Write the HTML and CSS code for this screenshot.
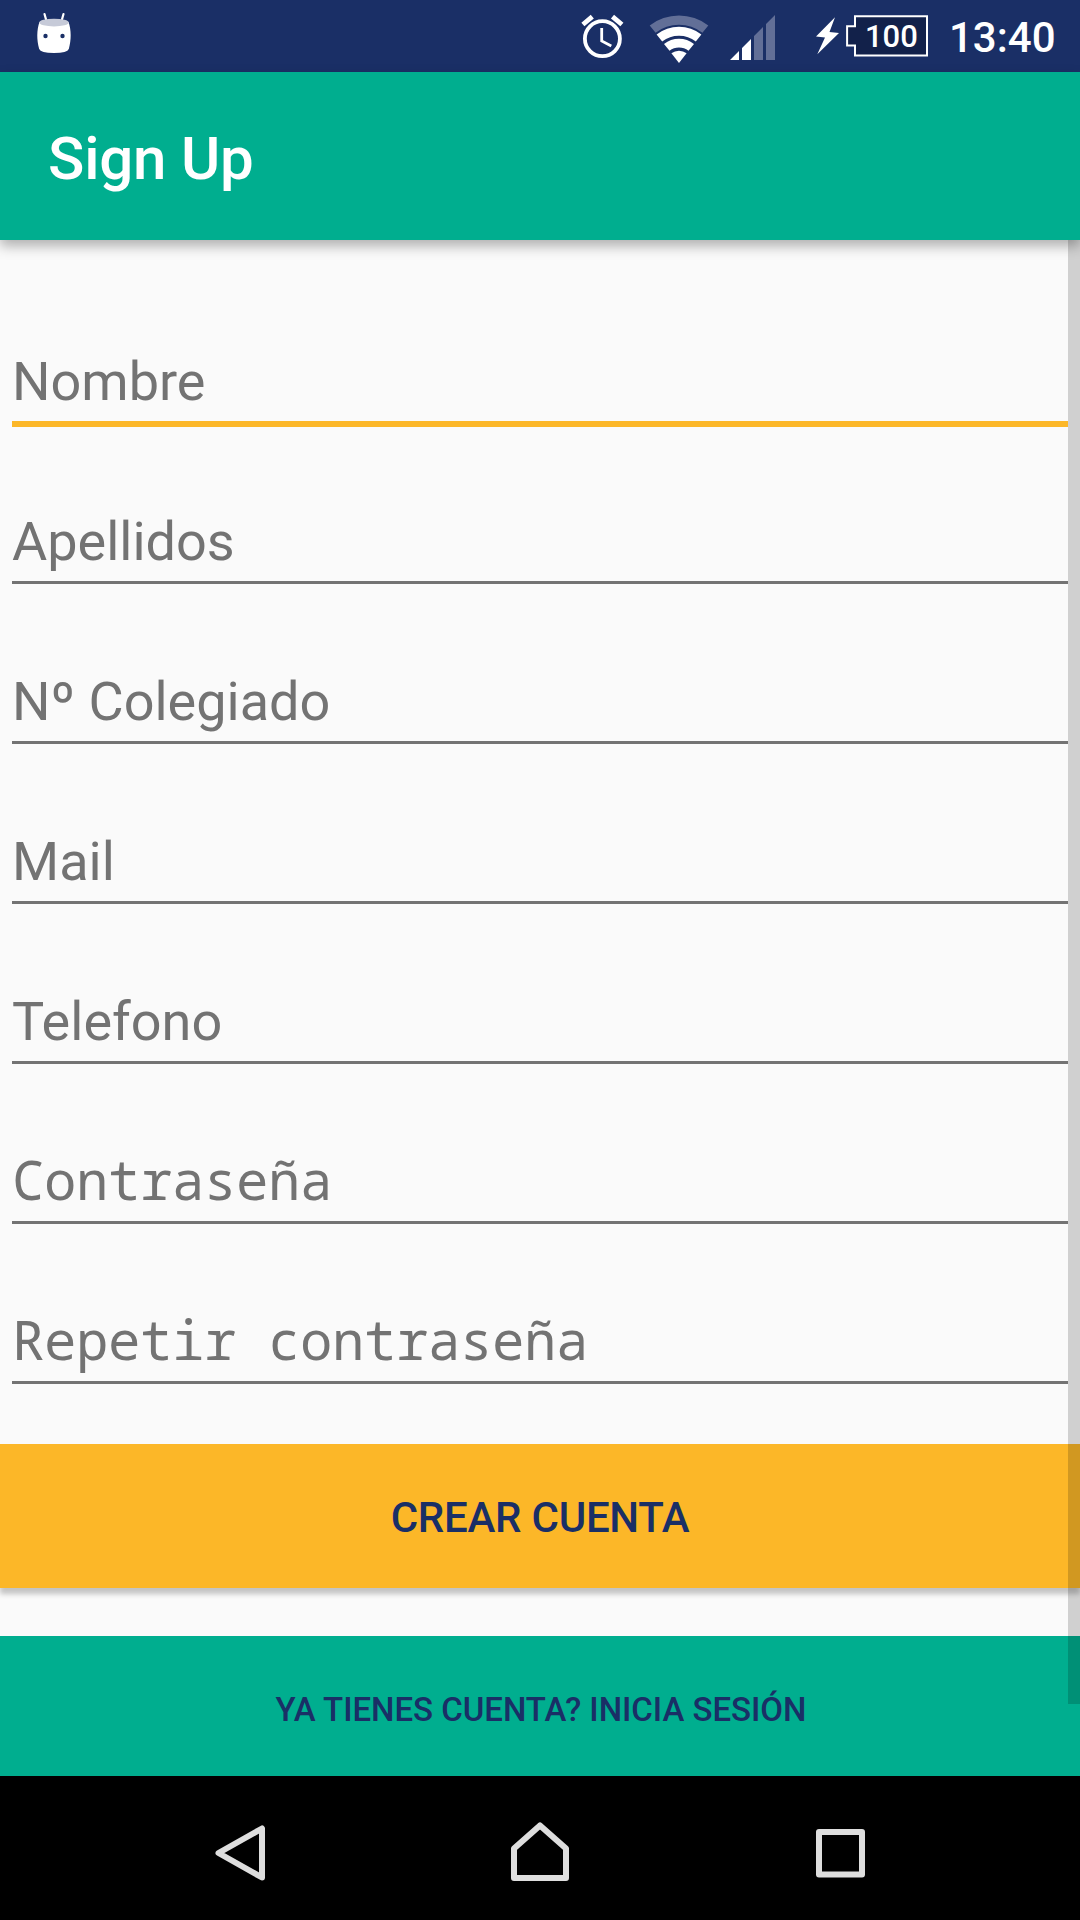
FILE: index.html
```html
<!DOCTYPE html>
<html lang="es">
<head>
<meta charset="utf-8">
<title>Sign Up</title>
<link rel="stylesheet" href="styles.css">
</head>
<body>
<div class="screen">
  <div class="status-bar">
    <svg class="icon-droid" width="36" height="72" viewBox="36 0 36 72">
      <path d="M44.500 14L46.300 20.500M63.500 14L61.700 20.500" stroke="#fff" stroke-width="2.200" stroke-linecap="round"/>
      <path d="M39.500 22C36.600 30 36.600 40 39.200 49Q40.500 53 54 53T68.800 49C71.400 40 71.400 30 68.500 22Q54 29 39.500 22Z" fill="#fff"/>
      <ellipse cx="54" cy="22.600" rx="14.800" ry="3.900" fill="#c6cad8"/>
      <circle cx="45.500" cy="36" r="2.200" fill="#1a2f66"/>
      <circle cx="62.500" cy="36" r="2.200" fill="#1a2f66"/>
    </svg>
    <div class="status-right">
      <svg width="44" height="72" viewBox="580 0 44 72" fill="none" stroke="#fff">
        <circle cx="602.400" cy="38.700" r="17.500" stroke-width="3.800"/>
        <path d="M582.900 24.500L592.300 16.600M621.900 24.500L612.500 16.600" stroke-width="4.800"/>
        <path d="M601.700 28V41L611.300 46" stroke-width="2.800"/>
      </svg>
      <svg class="icon-wifi" width="60" height="72" viewBox="-30 -63 60 72" fill="#fff">
        <path fill="#626f97" d="M-29.300 -37.600A48 48 0 0 1 29.300 -37.600L23.400 -30.200A38 38 0 0 0 -23.400 -30.200Z"/>
        <path d="M-22.400 -28.600A36.300 36.300 0 0 1 22.400 -28.600L16.800 -21.500A27.300 27.300 0 0 0 -16.800 -21.500Z"/>
        <path d="M-15 -19.100A24.300 24.300 0 0 1 15 -19.100L9.500 -12.200A15.500 15.500 0 0 0 -9.500 -12.200Z"/>
        <path d="M-7.600 -9.700A12.300 12.300 0 0 1 7.600 -9.700L0 0Z"/>
      </svg>
      <svg class="icon-signal" width="45" height="72" viewBox="730 0 45 72" fill="#fff">
        <path d="M730 60L739 51V60ZM742 60V48L751 39V60Z"/>
        <path fill="#626f97" d="M754 60V36L763 27V60ZM766 60V24L775 15V60Z"/>
      </svg>
      <svg class="icon-bolt" width="24" height="72" viewBox="816 0 24 72" fill="#fff">
        <path d="M835 17.300L816 36.500L825 37.500L817.300 54.300L839 33L829.500 32Z"/>
      </svg>
      <div class="battery">
        <svg width="82" height="72" viewBox="846 0 82 72">
          <path d="M855 16.200H927V55.500H855V45.500H847.100V26.200H855Z" fill="#12214a" stroke="#fff" stroke-width="2"/>
        </svg>
        <span class="battery-level">100</span>
      </div>
      <span class="clock">13:40</span>
    </div>
  </div>

  <header class="app-bar">Sign Up</header>

  <main class="content">
    <form class="form">
      <div class="field focused">Nombre</div>
      <div class="field">Apellidos</div>
      <div class="field">Nº Colegiado</div>
      <div class="field">Mail</div>
      <div class="field">Telefono</div>
      <div class="field password">Contraseña</div>
      <div class="field password">Repetir contraseña</div>
    </form>
    <button class="create">CREAR CUENTA</button>
    <button class="login">YA TIENES CUENTA? INICIA SESIÓN</button>
    <div class="scrollbar"></div>
  </main>

  <nav class="nav-bar">
    <svg width="60" height="144" viewBox="210 1776 60 144"><path d="M262 1828.500V1877.500L218.500 1853Z"/></svg>
    <svg width="60" height="144" viewBox="510 1776 60 144"><path d="M540 1825.500L566 1848.500V1878H514V1848.500Z"/></svg>
    <svg width="60" height="144" viewBox="810 1776 60 144"><path d="M819 1832H862V1874.500H819Z"/></svg>
  </nav>
</div>
</body>
</html>
```
FILE: styles.css
```css
* { box-sizing: border-box; }

body {
  margin: 0;
  background: #fafafa;
  font-family: Roboto, "Noto Sans", sans-serif;
}

svg { display: block; flex: none; }

.screen {
  width: 1080px;
  height: 1920px;
  display: flex;
  flex-direction: column;
  overflow: hidden;
}

.status-bar {
  height: 72px;
  flex: none;
  display: flex;
  justify-content: space-between;
  padding: 0 25px 0 36px;
  background: #1a2f66;
  color: #fff;
  font-weight: 500;
}

.status-right { display: flex; }
.icon-wifi { margin-left: 25px; }
.icon-signal { margin-left: 21px; }
.icon-bolt { margin-left: 41px; }

.battery {
  display: grid;
  margin-left: 6px;
}
.battery > * { grid-area: 1 / 1; }
.battery-level {
  font-size: 31px;
  line-height: 73px;
  padding-left: 19px;
}

.clock {
  width: 106px;
  margin-left: 21px;
  font-size: 42px;
  line-height: 76px;
}

.app-bar {
  position: relative;
  z-index: 1;
  height: 168px;
  flex: none;
  padding: 5px 48px 0;
  background: #00ae8f;
  box-shadow: 0 6px 12px rgba(0, 0, 0, .3);
  color: #fff;
  font-size: 60px;
  font-weight: 500;
  letter-spacing: -.2px;
  line-height: 163px;
}

.content {
  position: relative;
  height: 1536px;
  flex: none;
  display: flex;
  flex-direction: column;
}

.form { padding: 27px 12px 0; }

.field {
  height: 160px;
  padding-top: 83px;
  background: linear-gradient(#737373, #737373) 0 154px / 100% 3px no-repeat;
  color: #737373;
  font-size: 54px;
  line-height: 63px;
}
.field.focused {
  background: linear-gradient(#fcb728, #fcb728) 0 154px / 100% 6px no-repeat;
}
.field.password {
  padding-top: 81px;
  font-family: "Droid Sans Mono", "Noto Sans Mono", "DejaVu Sans Mono", monospace;
  letter-spacing: -.4px;
}

button {
  border: 0;
  font-family: inherit;
  font-weight: 500;
  color: #1a2f66;
  text-align: center;
}

.create {
  height: 144px;
  margin-top: 57px;
  padding: 3px 0 0;
  background: #fcb728;
  box-shadow: 0 6px 5px rgba(0, 0, 0, .22);
  font-size: 42px;
  letter-spacing: -.25px;
}

.login {
  height: 140px;
  margin-top: 48px;
  padding: 7px 0 0 2px;
  background: #00ae8f;
  font-size: 33px;
  letter-spacing: -.03px;
}

.scrollbar {
  position: absolute;
  top: 0;
  right: 0;
  width: 12px;
  height: 1464px;
  background: rgba(0, 0, 0, .17);
}

.nav-bar {
  height: 144px;
  flex: none;
  display: flex;
  justify-content: space-between;
  padding: 0 210px;
  background: #000;
  fill: none;
  stroke: #dedede;
  stroke-width: 6px;
  stroke-linejoin: round;
}
```
